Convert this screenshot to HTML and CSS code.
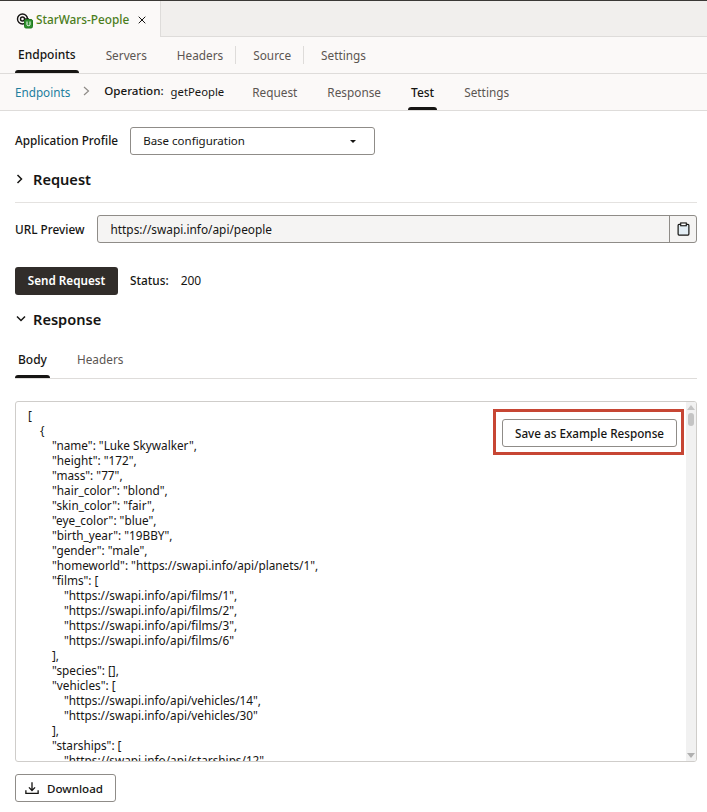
FILE: index.html
```html
<!DOCTYPE html>
<html>
<head>
    <title>StarWars-People</title>
    <link rel="stylesheet" href="styles.css">
</head>
<body>

<div class="doc-tabs">
    <div class="doc-tab">
        <svg class="doc-icon" width="18" height="18" viewBox="0 0 18 18">
            <circle cx="6.5" cy="7" r="5" fill="none" stroke="#161513" stroke-width="1.4"/>
            <circle cx="6.5" cy="7" r="2" fill="none" stroke="#161513" stroke-width="1.4"/>
            <path d="M9 7h4" stroke="#161513" stroke-width="1.4"/>
            <rect x="8.5" y="7.5" width="8" height="8.5" rx="1.5" fill="#2f8f2f" stroke="#1f7a1f"/>
            <path d="M11 9.5v3.2q0 1 1.5 1t1.5-1V9.5" fill="none" stroke="#fff" stroke-width="1"/>
        </svg>
        <span class="doc-name">StarWars-People</span>
        <svg class="doc-close" width="8" height="8" viewBox="0 0 8 8"><path d="M.7.7l6.6 6.6M7.3.7L.7 7.3" stroke="#161513" stroke-width="1"/></svg>
    </div>
</div>

<div class="main-tabs">
    <a class="tab tab-main active">Endpoints</a>
    <a class="tab tab-main">Servers</a>
    <a class="tab tab-main tab-before-sep">Headers</a>
    <span class="sep"></span>
    <a class="tab tab-main tab-before-sep">Source</a>
    <span class="sep"></span>
    <a class="tab tab-main">Settings</a>
</div>

<div class="sub-tabs">
    <a class="crumb">Endpoints</a>
    <svg class="crumb-arrow" width="7" height="10" viewBox="0 0 7 10"><path d="M1 1l4.5 4-4.5 4" fill="none" stroke="#8f8c88" stroke-width="1.2"/></svg>
    <span class="op-label">Operation:</span>
    <span class="op-name">getPeople</span>
    <a class="tab tab-sub">Request</a>
    <a class="tab tab-sub">Response</a>
    <a class="tab tab-sub active">Test</a>
    <a class="tab tab-sub">Settings</a>
</div>

<div class="content">
    <div class="profile-row">
        <label class="field-label">Application Profile</label>
        <div class="select">
            <span>Base configuration</span>
            <span class="caret"></span>
        </div>
    </div>

    <div class="section-head section-request">
        <svg width="8" height="10" viewBox="0 0 8 10"><path d="M1.5 1l4 4-4 4" fill="none" stroke="#161513" stroke-width="1.5"/></svg>
        <h3>Request</h3>
    </div>

    <div class="url-row">
        <label class="field-label">URL Preview</label>
        <div class="url-box">
            <span class="url-text">https://swapi.info/api/people</span>
            <span class="url-btn">
                <svg width="13" height="14" viewBox="0 0 14 15"><rect x="1.2" y="2.5" width="11.6" height="11.5" rx="1" fill="#e4eef5" stroke="#161513" stroke-width="1.3"/><rect x="4" y="1" width="6" height="3" fill="#fff" stroke="#161513" stroke-width="1.2"/></svg>
            </span>
        </div>
    </div>

    <div class="send-row">
        <button class="btn-dark">Send Request</button>
        <span class="status-label">Status:</span>
        <span class="status-value">200</span>
    </div>

    <div class="section-head section-response">
        <svg width="10" height="8" viewBox="0 0 10 8"><path d="M1 1.5l4 4 4-4" fill="none" stroke="#161513" stroke-width="1.5"/></svg>
        <h3>Response</h3>
    </div>

    <div class="body-tabs">
        <a class="tab tab-body active">Body</a>
        <a class="tab tab-body">Headers</a>
    </div>

    <div class="code-box">
        <div class="code">
            <div>[</div>
            <div class="i1">{</div>
            <div class="i2">"name": "Luke Skywalker",</div>
            <div class="i2">"height": "172",</div>
            <div class="i2">"mass": "77",</div>
            <div class="i2">"hair_color": "blond",</div>
            <div class="i2">"skin_color": "fair",</div>
            <div class="i2">"eye_color": "blue",</div>
            <div class="i2">"birth_year": "19BBY",</div>
            <div class="i2">"gender": "male",</div>
            <div class="i2">"homeworld": "https://swapi.info/api/planets/1",</div>
            <div class="i2">"films": [</div>
            <div class="i3">"https://swapi.info/api/films/1",</div>
            <div class="i3">"https://swapi.info/api/films/2",</div>
            <div class="i3">"https://swapi.info/api/films/3",</div>
            <div class="i3">"https://swapi.info/api/films/6"</div>
            <div class="i2">],</div>
            <div class="i2">"species": [],</div>
            <div class="i2">"vehicles": [</div>
            <div class="i3">"https://swapi.info/api/vehicles/14",</div>
            <div class="i3">"https://swapi.info/api/vehicles/30"</div>
            <div class="i2">],</div>
            <div class="i2">"starships": [</div>
            <div class="i3">"https://swapi.info/api/starships/12",</div>
        </div>
        <div class="scrollbar">
            <span class="arrow-up"></span>
            <span class="thumb"></span>
            <span class="arrow-down"></span>
        </div>
        <div class="save-callout">
            <button class="btn-outline btn-save">Save as Example Response</button>
        </div>
    </div>

    <button class="btn-outline btn-download">
        <svg width="14" height="14" viewBox="0 0 16 15"><path d="M8 1v9M4.5 6.8L8 10.3l3.5-3.5M1 10v3.7h14V10" fill="none" stroke="#161513" stroke-width="1.5"/></svg>
        Download
    </button>
</div>

</body>
</html>
```

FILE: styles.css
```css
body {
    margin: 0;
    font-family: "Noto Sans", "Open Sans", sans-serif;
    font-size: 12px;
    color: #161513;
    background-color: #fff;
}
button {
    font-family: inherit;
}
.doc-tabs {
    height: 35px;
    background-color: #f1efed;
    border-top: 1px solid #3b3936;
    border-bottom: 1px solid #dedcda;
    display: flex;
}
.doc-tab {
    width: 161px;
    height: 36px;
    box-sizing: border-box;
    background-color: #fbf9f8;
    border-right: 1px solid #dedcda;
    display: flex;
    align-items: center;
    padding-left: 16px;
}
.doc-icon {
    flex: none;
    margin-top: 3px;
}
.doc-name {
    margin-left: 2px;
    color: #4b7d1c;
    font-weight: 500;
    font-size: 11.8px;
}
.doc-close {
    margin-left: 9px;
    margin-top: 2px;
}
.main-tabs {
    height: 36px;
    background-color: #fbf9f8;
    border-bottom: 1px solid #dedcda;
    display: flex;
    align-items: stretch;
    padding-left: 15px;
}
.sub-tabs {
    height: 36px;
    background-color: #fbf9f8;
    border-bottom: 1px solid #dedcda;
    display: flex;
    align-items: stretch;
    padding-left: 15px;
}
.tab {
    position: relative;
    display: flex;
    align-items: center;
    color: #5b5652;
    font-size: 11.8px;
}
.tab.active {
    color: #161513;
    font-weight: 500;
    font-size: 12px;
}
.tab.active::after {
    content: "";
    position: absolute;
    left: 0;
    right: 0;
    bottom: 0;
    height: 3px;
    background-color: #161513;
    border-radius: 3px 3px 0 0;
}
.tab-main {
    padding: 0 3px 1px;
    margin-right: 24px;
}
.tab-main.tab-before-sep {
    margin-right: 9px;
}
.sep {
    width: 1px;
    height: 18px;
    margin: 9px 14px 0 0;
    background-color: #dedcda;
}
.crumb {
    color: #227e9e;
    align-self: center;
    margin-top: -1px;
    font-size: 11.7px;
}
.crumb-arrow {
    align-self: center;
    margin: -2px 0 0 13px;
}
.op-label {
    align-self: center;
    margin: -3px 0 0 14px;
    font-weight: 500;
    font-size: 11.6px;
}
.op-name {
    align-self: center;
    margin: -1px 1px 0 7px;
    font-size: 11.3px;
}
.tab-sub {
    margin-left: 24px;
    padding: 0 3px 0;
}
.content {
    padding: 16px 10px 0 15px;
}
.profile-row {
    display: flex;
    align-items: center;
}
.field-label {
    font-weight: 500;
    font-size: 11.8px;
    margin-top: -1px;
}
.profile-row .field-label {
    margin-top: -3px;
}
.select {
    width: 245px;
    height: 28px;
    box-sizing: border-box;
    margin-left: 12px;
    padding: 0 18px 2px 12px;
    border: 1px solid #8f8c88;
    border-radius: 3px;
    display: flex;
    align-items: center;
    justify-content: space-between;
    font-size: 11.5px;
}
.caret {
    width: 0;
    height: 0;
    margin-top: 2px;
    border-left: 3px solid transparent;
    border-right: 3px solid transparent;
    border-top: 3.5px solid #161513;
}
.section-head {
    display: flex;
    align-items: center;
}
.section-head h3 {
    margin: 0;
    font-size: 14.6px;
    font-weight: 600;
}
.section-request {
    height: 30px;
    margin-top: 9px;
    padding-left: 1px;
    padding-bottom: 8px;
    border-bottom: 1px solid #e4e2e0;
}
.section-request h3 {
    margin-left: 9px;
}
.url-row {
    display: flex;
    align-items: center;
    margin-top: 12px;
}
.url-box {
    flex: 1;
    height: 28px;
    box-sizing: border-box;
    margin-left: 13px;
    border: 1px solid #8f8c88;
    border-radius: 3px;
    background-color: #f5f4f3;
    display: flex;
    align-items: center;
    justify-content: space-between;
    font-size: 11.85px;
}
.url-text {
    padding-left: 12px;
}
.url-btn {
    width: 26px;
    height: 100%;
    border-left: 1px solid #8f8c88;
    display: flex;
    align-items: center;
    justify-content: center;
}
.send-row {
    display: flex;
    align-items: center;
    margin-top: 24px;
}
.btn-dark {
    width: 103px;
    height: 28px;
    padding: 0 0 2px;
    border: none;
    border-radius: 3px;
    background-color: #312d2a;
    color: #fff;
    font-size: 11.7px;
    font-weight: 600;
}
.status-label {
    margin: -2px 0 0 12px;
    font-weight: 500;
    font-size: 11.8px;
}
.status-value {
    margin: -2px 0 0 12px;
}
.section-response {
    margin-top: 14px;
    height: 20px;
    padding-left: 1px;
}
.section-response h3 {
    margin-left: 7px;
}
.body-tabs {
    display: flex;
    height: 38px;
    margin-top: 11px;
    border-bottom: 1px solid #dedcda;
}
.tab-body {
    padding: 0 3px 0;
    margin-right: 24px;
}
.code-box {
    position: relative;
    height: 361px;
    box-sizing: border-box;
    margin-top: 22px;
    border: 1px solid #cfcdca;
    border-radius: 3px;
    overflow: hidden;
}
.code {
    padding: 6px 0 0 12px;
    line-height: 15px;
    font-size: 11.78px;
}
.code .i1 {
    padding-left: 12px;
}
.code .i2 {
    padding-left: 24px;
}
.code .i3 {
    padding-left: 36px;
}
.scrollbar {
    position: absolute;
    top: 0;
    right: 0;
    bottom: 0;
    width: 10px;
    background-color: #f1f1f1;
}
.thumb {
    position: absolute;
    top: 11px;
    left: 2px;
    width: 6px;
    height: 13px;
    border-radius: 3px;
    background-color: #c4c4c4;
}
.arrow-up,
.arrow-down {
    position: absolute;
    left: 1px;
    width: 0;
    height: 0;
    border-left: 4px solid transparent;
    border-right: 4px solid transparent;
}
.arrow-up {
    top: 3px;
    border-bottom: 5px solid #c4c4c4;
}
.arrow-down {
    bottom: 3px;
    border-top: 5px solid #b0b0b0;
}
.save-callout {
    position: absolute;
    top: 7px;
    right: 12px;
    border: 3px solid #c74634;
    padding: 7px 4px 5px 6px;
    background-color: #fff;
    display: flex;
}
.btn-outline {
    height: 28px;
    box-sizing: border-box;
    padding: 0;
    border: 1px solid #8f8c88;
    border-radius: 3px;
    background-color: #fff;
    color: #161513;
    font-weight: 500;
}
.btn-save {
    width: 175px;
    font-size: 11.7px;
}
.btn-download {
    width: 101px;
    margin-top: 12px;
    padding-left: 9px;
    display: flex;
    align-items: center;
    gap: 8px;
    font-size: 11.6px;
}
```
